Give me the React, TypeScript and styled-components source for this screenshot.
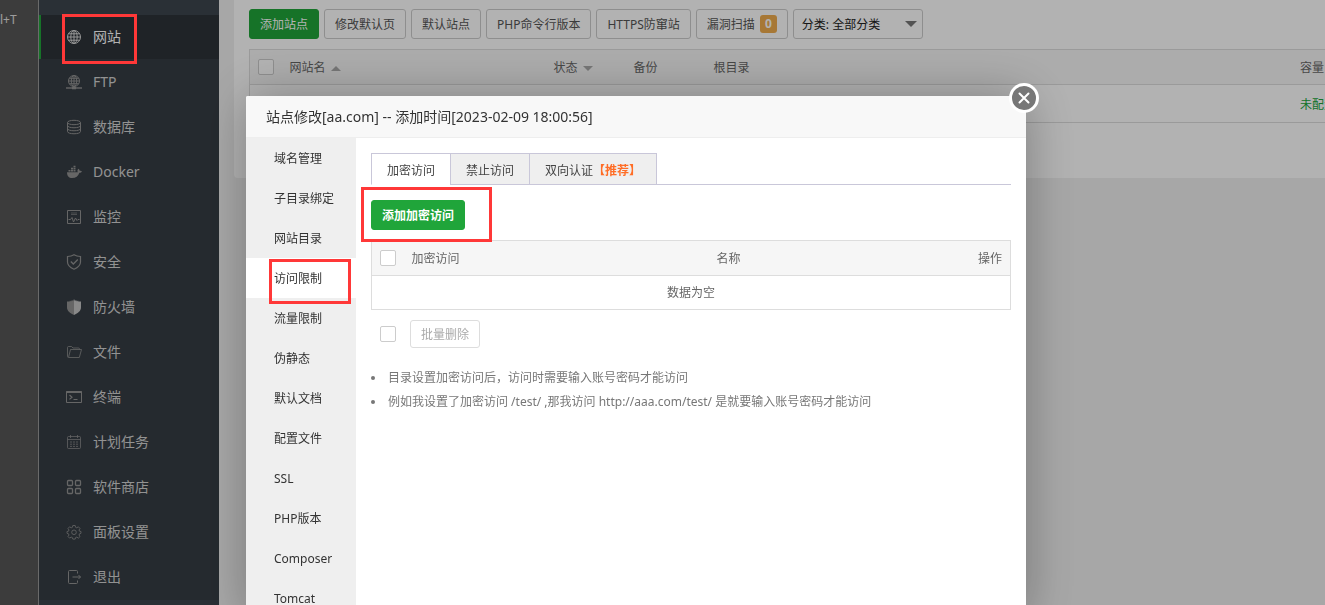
import React from "react";
import styled, { createGlobalStyle, css } from "styled-components";

const GlobalStyle = createGlobalStyle`
  *, *::before, *::after { box-sizing: border-box; }
  html, body { margin: 0; height: 100%; overflow: hidden; }
  body, button, input, select {
    font-family: "Noto Sans", "Noto Sans CJK SC", sans-serif;
    font-size: 12px;
  }
  #root { height: 100%; }
  ul { margin: 0; padding: 0; list-style: none; }
  a { color: inherit; text-decoration: none; }
`;

const Page = styled.div`
  position: relative;
  display: flex;
  min-height: 100vh;
  background: #f0f0f0;
`;

const EdgeStrip = styled.div`
  flex: 0 0 39px;
  padding-top: 10px;
  border-right: 1px solid #999;
  background: #575757;
  color: #e0e0e0;
  line-height: 20px;
  white-space: nowrap;
`;

const Sidebar = styled.nav`
  flex: 0 0 180px;
  padding-top: 15px;
  background: #3d454e;
`;

const MenuLink = styled.a<{ $active?: boolean }>`
  display: flex;
  align-items: center;
  gap: 11px;
  height: 44px;
  padding-left: 25px;
  border-left: 2px solid ${(p) => (p.$active ? "#20a53a" : "transparent")};
  background: ${(p) => (p.$active ? "#2d3339" : "#363d44")};
  color: ${(p) => (p.$active ? "#fff" : "#d2d2d2")};
  font-size: 14px;
  line-height: 44px;

  svg {
    color: ${(p) => (p.$active ? "#d8d8d8" : "#929292")};
  }
`;

const MenuItem = styled.li`
  padding-bottom: 1px;
  background: #363d44;
`;

const Main = styled.main`
  flex: 1;
  min-width: 0;
  padding-left: 15px;
`;

const Card = styled.section`
  padding: 9px 0 55px 15px;
  border-radius: 0 0 0 4px;
  background: #fff;
`;

const Toolbar = styled.div`
  display: flex;
  gap: 5px;
  margin-bottom: 10px;
`;

const Button = styled.button<{ $kind?: "primary" | "muted"; $strong?: boolean }>`
  display: inline-flex;
  align-items: center;
  gap: 5px;
  height: 30px;
  padding: 0 10px;
  border: 1px solid #ccc;
  border-radius: 3px;
  background: #fff;
  color: #555;
  font-weight: ${(p) => (p.$strong ? 700 : 400)};
  white-space: nowrap;
  ${(p) =>
    p.$kind === "primary" &&
    css`
      border-color: #20a53a;
      background: #20a53a;
      color: #fff;
    `}
  ${(p) =>
    p.$kind === "muted" &&
    css`
      height: 28px;
      border-color: #ddd;
      color: #aaa;
    `}
`;

const CountBadge = styled.span`
  width: 17px;
  border-radius: 3px;
  background: #f0ad4e;
  color: #fff;
  font-weight: 700;
  line-height: 18px;
  text-align: center;
`;

const SelectBox = styled.label`
  position: relative;
  width: 130px;

  svg {
    position: absolute;
    top: 12px;
    right: 6px;
    color: #777;
    pointer-events: none;
  }
`;

const Select = styled.select`
  width: 100%;
  height: 30px;
  padding: 0 8px;
  border: 1px solid #ccc;
  border-radius: 3px;
  appearance: none;
  background: #fff;
  color: #222;
`;

const Checkbox = styled.input.attrs({ type: "checkbox" })`
  display: block;
  width: 16px;
  height: 16px;
  margin: 0;
  border: 1px solid #ccc;
  border-radius: 2px;
  appearance: none;
  background: #fff;
`;

const Table = styled.table`
  width: 100%;
  border: 1px solid #ddd;
  border-collapse: collapse;
  table-layout: fixed;
  color: #666;
  line-height: 18px;

  th, td {
    height: 35px;
    padding: 2px 8px 0;
    border-bottom: 1px solid #ddd;
    font-weight: 400;
    text-align: left;
    white-space: nowrap;
  }
  th { background: #f6f6f6; }
  th:first-child { padding-top: 0; }
`;

const SiteTable = styled(Table)`
  border-right: 0;
  td { height: 38px; }
`;

const Sortable = styled.span`
  display: inline-flex;
  align-items: center;
  gap: 5px;
  svg { color: #aaa; }
`;

const GreenLink = styled.a`
  && { color: #20a53a; }
`;

const Overlay = styled.div`
  position: fixed;
  inset: 0;
  display: flex;
  align-items: flex-start;
  padding: 96px 24px 0 246px;
  overflow: hidden;
  background: rgba(0, 0, 0, 0.3);
`;

const Dialog = styled.div`
  position: relative;
  flex: 0 1 780px;
  border-radius: 2px;
  background: #fff;
  box-shadow: 1px 1px 50px rgba(0, 0, 0, 0.3);
`;

const DialogTitle = styled.h2`
  height: 42px;
  margin: 0;
  padding-left: 20px;
  border-bottom: 1px solid #eee;
  border-radius: 2px 2px 0 0;
  background: #f8f8f8;
  color: #333;
  font-size: 14px;
  font-weight: 400;
  line-height: 42px;
`;

const CloseButton = styled.button`
  position: absolute;
  top: -13px;
  right: -13px;
  display: flex;
  align-items: center;
  justify-content: center;
  width: 30px;
  height: 30px;
  padding: 0;
  border: 3px solid #fff;
  border-radius: 50%;
  background: #777;
  color: #fff;
`;

const DialogBody = styled.div`
  display: flex;
`;

const SideTabs = styled.ul`
  flex: 0 0 110px;
  background: #efefef;
`;

const SideTab = styled.li<{ $active?: boolean }>`
  position: relative;
  height: 40px;
  padding-left: 28px;
  background: ${(p) => (p.$active ? "#fff" : "transparent")};
  color: #333;
  line-height: 42px;
`;

const Content = styled.div`
  flex: 1;
  min-width: 0;
  padding: 15px;
`;

const Tabs = styled.div`
  display: flex;
  margin-bottom: 15px;
  border-bottom: 1px solid #c9c7d9;
`;

const Tab = styled.button<{ $active?: boolean }>`
  height: 32px;
  margin-bottom: -1px;
  padding: 2px 15px 0;
  border: 1px solid #c9c7d9;
  border-right-width: 0;
  border-bottom-color: ${(p) => (p.$active ? "#fff" : "#c9c7d9")};
  background: ${(p) => (p.$active ? "#fff" : "#efefef")};
  color: #444;
  white-space: nowrap;

  &:last-child { border-right-width: 1px; }
`;

const Recommended = styled.strong`
  color: #ff6d26;
`;

const ActionBar = styled.div`
  position: relative;
  display: flex;
  margin-bottom: 10px;
`;

const AuthTable = styled(Table)`
  td { height: 34px; padding-top: 0; text-align: center; }
  th:last-child { text-align: right; }
`;

const BatchRow = styled.div`
  display: flex;
  align-items: center;
  gap: 14px;
  margin: 10px 0 18px;
  padding-left: 9px;
`;

const Notes = styled.ul`
  color: #777;
  line-height: 24px;
`;

const Note = styled.li`
  display: flex;
  align-items: center;
  gap: 13px;

  &::before {
    content: "";
    width: 4px;
    height: 4px;
    border-radius: 50%;
    background: #777;
  }
`;

const Highlight = styled.div<{ $top: number; $left: number; $width: number; $height: number }>`
  position: absolute;
  z-index: 2;
  top: ${(p) => p.$top}px;
  left: ${(p) => p.$left}px;
  width: ${(p) => p.$width}px;
  height: ${(p) => p.$height}px;
  border: 3px solid #ff3838;
  pointer-events: none;
`;

const Icon = ({ children }: { children: React.ReactNode }) => (
  <svg width="16" height="16" viewBox="0 0 16 16" fill="none" stroke="currentColor" strokeWidth="1" aria-hidden="true">
    {children}
  </svg>
);

const Caret = ({ up, size = 10 }: { up?: boolean; size?: number }) => (
  <svg width={size} height={size / 2} viewBox="0 0 10 5" fill="currentColor" aria-hidden="true">
    <path d={up ? "M0 5L5 0L10 5Z" : "M0 0H10L5 5Z"} />
  </svg>
);

const menu = [
  {
    label: "网站",
    icon: (
      <Icon>
        <circle cx="8" cy="8" r="6.5" />
        <ellipse cx="8" cy="8" rx="3.2" ry="6.5" />
        <path d="M8 1.5v13M1.5 8h13M2.5 4.8h11M2.5 11.2h11" />
      </Icon>
    ),
  },
  {
    label: "FTP",
    icon: (
      <Icon>
        <circle cx="8" cy="7" r="5.5" />
        <ellipse cx="8" cy="7" rx="2.7" ry="5.5" />
        <path d="M8 1.5v12M2.5 7h11M3.3 4.3h9.4M3.3 9.7h9.4" />
        <path d="M0 14h16" strokeWidth="1.4" />
        <path d="M6 14h4" strokeWidth="2.6" />
      </Icon>
    ),
  },
  {
    label: "数据库",
    icon: (
      <Icon>
        <ellipse cx="8" cy="3.5" rx="6.5" ry="2.2" />
        <path d="M1.5 3.5v9c0 3 13 3 13 0v-9M1.5 6.5c0 3 13 3 13 0M1.5 9.5c0 3 13 3 13 0" />
      </Icon>
    ),
  },
  {
    label: "Docker",
    icon: (
      <Icon>
        <path
          d="M1 8.2h10.8c-.5-.9-.4-1.800 0-2.600l.7-.8c.8.6 1.200 1.200 1.200 2 .8-.2 1.600 0 2.200.4-.4 1.100-1.300 1.500-2.500 1.500C12.200 12 9.800 14 6.200 14 2.800 14 1 12 1 8.200Z"
          fill="currentColor"
          stroke="none"
        />
        <path d="M2.500 6.800h2M5 6.800h2M7.500 6.800h2M5 4.600h2M7.500 4.600h2M7.500 2.500h2" strokeWidth="1.600" />
      </Icon>
    ),
  },
  {
    label: "监控",
    icon: (
      <Icon>
        <path d="M1.500 1.500h13v13h-13z" />
        <path d="M5 4h6M5 5.500h6" strokeOpacity=".6" />
        <path d="M2.500 10.500h2L6 8.500l1.500 4.500L9.500 9l1.500 2.500 1-1h1.500" />
      </Icon>
    ),
  },
  {
    label: "安全",
    icon: (
      <Icon>
        <path d="M8 .8c2 1.300 4.200 1.700 6.500 1.700v5.500c0 3.500-2.500 5.500-6.500 7.200C4 13.500 1.500 11.500 1.500 8V2.500C3.800 2.500 6 2.100 8 .8Z" strokeWidth="1.200" />
        <path d="M4.800 7.500l2.500 2.500 4.500-4.500" strokeWidth="1.300" />
      </Icon>
    ),
  },
  {
    label: "防火墙",
    icon: (
      <Icon>
        <path d="M8 0v16C4 14 1 12 1 8.500V3l1-1 1 1 1-1.500L5 2.500 6 1l1 1Z" fill="currentColor" stroke="none" />
        <path d="M8 0v16c4-2 7-4 7-7.500V3l-1-1-1 1-1-1.500-1 1L10 1 9 2Z" fill="#c4c4c4" stroke="none" />
      </Icon>
    ),
  },
  {
    label: "文件",
    icon: (
      <Icon>
        <path d="M3 13.500h10.300L15.500 5.500H4.500L2.500 13.500c-.6 0-1-.4-1-1V3.500c0-.6.4-1 1-1h3L7 4h5.500c.6 0 1 .4 1 1v.5" strokeOpacity=".8" />
      </Icon>
    ),
  },
  {
    label: "终端",
    icon: (
      <Icon>
        <path d="M.5 2.500h15v11H.5z" />
        <path d="M.5 3h15" strokeWidth="2" />
        <path d="M3.500 6l2.500 2.200-2.500 2.200M7.500 10.500h4" strokeWidth="1.200" />
      </Icon>
    ),
  },
  {
    label: "计划任务",
    icon: (
      <Icon>
        <path d="M2.500 2.500h11a1 1 0 0 1 1 1v10a1 1 0 0 1-1 1h-11a1 1 0 0 1-1-1v-10a1 1 0 0 1 1-1ZM1.500 5.500h13M4.500 1v3M11.500 1v3" strokeOpacity=".75" />
        <path d="M4 8h8M4 10.200h8M4 12.400h8" strokeDasharray="2 1" strokeOpacity=".75" />
      </Icon>
    ),
  },
  {
    label: "软件商店",
    icon: (
      <Icon>
        <g strokeWidth="1.300">
          <rect x="1.500" y="1.500" width="5" height="5" rx="1" />
          <rect x="9.500" y="1.500" width="5" height="5" rx="1" />
          <rect x="1.500" y="9.500" width="5" height="5" rx="1" />
          <rect x="9.500" y="9.500" width="5" height="5" rx="1" />
        </g>
      </Icon>
    ),
  },
  {
    label: "面板设置",
    icon: (
      <Icon>
        <path
          d="M6.800 1.500h2.400l.4 1.800 1.200.5 1.600-1 1.600 1.700-1 1.500.5 1.200 1.500.3v1.800l-1.500.5-.5 1.200 1 1.500-1.600 1.600-1.600-1-1.200.5-.4 1.500H6.800l-.4-1.500-1.200-.5-1.600 1-1.600-1.600 1-1.500-.5-1.200L1 9.300V7.500l1.500-.3.5-1.200-1-1.500 1.600-1.700 1.600 1 1.200-.5Z"
          strokeOpacity=".8"
        />
        <circle cx="8" cy="8.300" r="2.300" strokeOpacity=".8" />
      </Icon>
    ),
  },
  {
    label: "退出",
    icon: (
      <Icon>
        <path d="M11.500 4.500v-2a1 1 0 0 0-1-1h-7a1 1 0 0 0-1 1v11a1 1 0 0 0 1 1h7a1 1 0 0 0 1-1v-2" />
        <path d="M6.500 8h8M12.500 6l2 2-2 2" />
      </Icon>
    ),
  },
];

const sections = [
  "域名管理", "子目录绑定", "网站目录", "访问限制", "流量限制", "伪静态",
  "默认文档", "配置文件", "SSL", "PHP版本", "Composer", "Tomcat",
];

export default function App() {
  return (
    <Page>
      <GlobalStyle />
      <EdgeStrip>l+T</EdgeStrip>
      <Sidebar>
        <ul>
          {menu.map((m, i) => (
            <MenuItem key={m.label}>
              <MenuLink href="#" $active={i === 0}>
                {m.icon}
                {m.label}
              </MenuLink>
            </MenuItem>
          ))}
        </ul>
      </Sidebar>

      <Main>
        <Card>
          <Toolbar>
            <Button $kind="primary">添加站点</Button>
            <Button>修改默认页</Button>
            <Button>默认站点</Button>
            <Button>PHP命令行版本</Button>
            <Button>HTTPS防窜站</Button>
            <Button>
              漏洞扫描<CountBadge>0</CountBadge>
            </Button>
            <SelectBox>
              <Select aria-label="分类">
                <option>分类: 全部分类</option>
              </Select>
              <Caret size={12} />
            </SelectBox>
          </Toolbar>
          <SiteTable>
            <colgroup>
              <col style={{ width: 32 }} />
              <col style={{ width: 264 }} />
              <col style={{ width: 80 }} />
              <col style={{ width: 80 }} />
              <col />
              <col style={{ width: 33 }} />
            </colgroup>
            <thead>
              <tr>
                <th><Checkbox aria-label="全选网站" /></th>
                <th><Sortable>网站名 <Caret up /></Sortable></th>
                <th><Sortable>状态 <Caret /></Sortable></th>
                <th>备份</th>
                <th>根目录</th>
                <th>容量</th>
              </tr>
            </thead>
            <tbody>
              <tr>
                <td colSpan={5} />
                <td><GreenLink href="#">未配置</GreenLink></td>
              </tr>
            </tbody>
          </SiteTable>
        </Card>
      </Main>

      <Overlay>
        <Dialog role="dialog" aria-labelledby="dialog-title">
          <DialogTitle id="dialog-title">站点修改[aa.com] -- 添加时间[2023-02-09 18:00:56]</DialogTitle>
          <CloseButton aria-label="关闭">
            <svg width="12" height="12" viewBox="0 0 12 12" stroke="currentColor" strokeWidth="2" strokeLinecap="round">
              <path d="M1.500 1.500l9 9M10.500 1.500l-9 9" />
            </svg>
          </CloseButton>
          <DialogBody>
            <SideTabs>
              {sections.map((s) => (
                <SideTab key={s} $active={s === "访问限制"}>
                  <a href="#">{s}</a>
                  {s === "访问限制" && <Highlight $top={1} $left={23} $width={82} $height={45} />}
                </SideTab>
              ))}
            </SideTabs>
            <Content>
              <Tabs>
                <Tab $active>加密访问</Tab>
                <Tab>禁止访问</Tab>
                <Tab>双向认证<Recommended>【推荐】</Recommended></Tab>
              </Tabs>
              <ActionBar>
                <Button $kind="primary" $strong>添加加密访问</Button>
                <Highlight $top={-13} $left={-10} $width={131} $height={55} />
              </ActionBar>
              <AuthTable>
                <colgroup>
                  <col style={{ width: 32 }} />
                  <col style={{ width: 305 }} />
                  <col />
                  <col style={{ width: 60 }} />
                </colgroup>
                <thead>
                  <tr>
                    <th><Checkbox aria-label="全选" /></th>
                    <th>加密访问</th>
                    <th>名称</th>
                    <th>操作</th>
                  </tr>
                </thead>
                <tbody>
                  <tr>
                    <td colSpan={4}>数据为空</td>
                  </tr>
                </tbody>
              </AuthTable>
              <BatchRow>
                <Checkbox aria-label="全选以批量操作" />
                <Button $kind="muted" disabled>批量删除</Button>
              </BatchRow>
              <Notes>
                <Note>目录设置加密访问后，访问时需要输入账号密码才能访问</Note>
                <Note>例如我设置了加密访问 /test/ ,那我访问 http://aaa.com/test/ 是就要输入账号密码才能访问</Note>
              </Notes>
            </Content>
          </DialogBody>
        </Dialog>
      </Overlay>
      <Highlight $top={14} $left={62} $width={75} $height={50} />
    </Page>
  );
}
